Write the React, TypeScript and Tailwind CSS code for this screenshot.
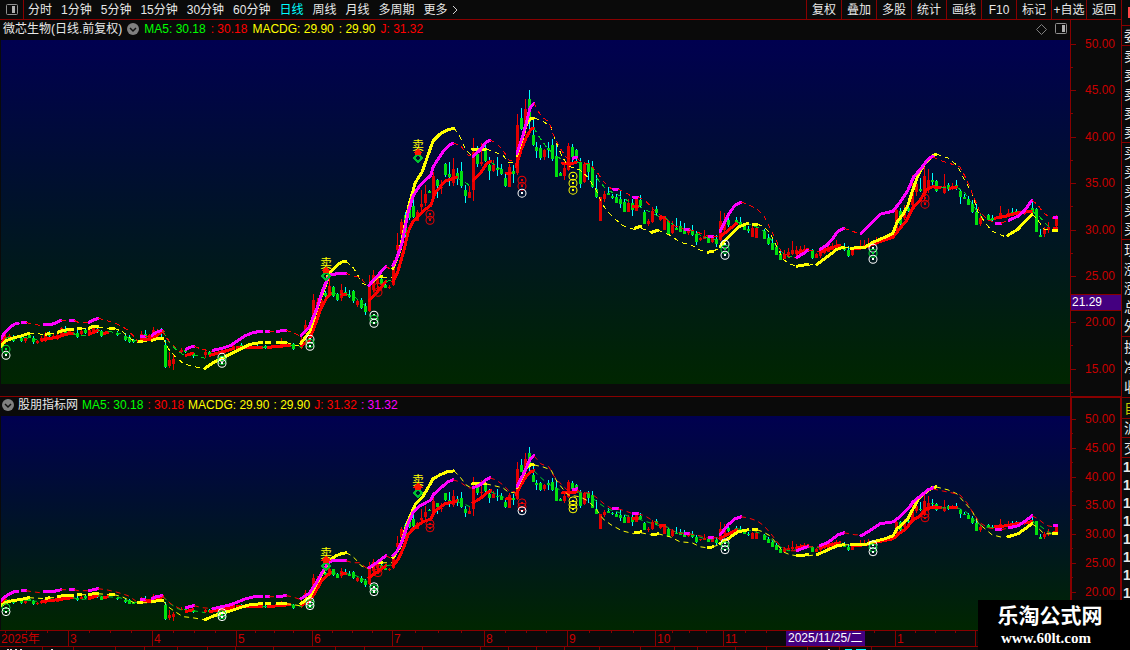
import { useMemo, useState, type ReactNode } from 'react'

type Tone = 'white' | 'green' | 'red' | 'yellow'
interface Candle { x: number; high: number; top: number; bottom: number; low: number; up: boolean }
interface Series { name: string; rise: string; fall: string; runs: string[] }
interface Legend { text: string; cls: string }

const TONES: Record<Tone, string> = { white: '#ffffff', green: '#00e030', red: '#f00000', yellow: '#ffff00' }

// x high top bottom low, r = rising day, g = falling day
const CANDLES = `
5 334 337 342 344 r|9 334 336 340 341 r|13 335 338 341 342 g|21 336 338 341 342 g|25 337 338 341 343 r|29 332 335 338 338 g|33 336 338 342 344 g
37 340 341 343 344 r|41 336 338 341 342 r|45 332 334 340 342 r|49 331 333 336 337 g|53 334 336 339 339 r|57 331 335 339 340 r|61 327 328 336 337 r
65 326 331 334 335 g|69 328 330 334 335 r|77 330 333 337 338 g|81 329 331 334 335 r|85 328 330 333 334 g|89 328 330 334 335 r|93 326 328 333 334 r
97 327 329 332 333 g|101 330 332 336 337 g|105 331 333 334 335 r|117 331 333 335 336 g|125 333 336 340 341 g|129 335 337 342 343 g|133 339 340 342 343 g
141 331 334 340 341 r|145 330 334 338 339 g|149 334 335 339 340 r|153 327 330 338 340 r|157 329 332 336 338 r|161 328 331 333 337 g
165 340 345 367 368 g|169 352 360 366 368 r|173 355 359 364 370 r|181 348 350 352 353 r|185 348 350 352 353 g|193 352 353 356 358 g|205 350 352 355 358 r|209 351 352 355 355 g
233 345 346 349 350 r|241 343 345 348 349 g|257 344 346 348 348 g|265 345 346 348 349 g|281 338 342 346 347 r|293 343 344 349 350 g|301 335 340 348 349 r
305 320 325 332 334 r|313 294 300 315 318 r|317 298 302 312 315 r|321 295 300 308 310 r|325 291 293 296 298 g|329 278 286 296 297 r|333 286 287 296 297 g
337 293 294 300 301 g|341 284 290 298 301 r|345 287 292 294 296 g|349 290 295 297 298 g|353 290 291 301 303 g|357 299 301 305 307 r|361 298 300 308 309 g|365 303 306 312 315 g
369 275 285 311 312 r|373 270 275 290 292 r|377 275 277 284 286 r|381 277 279 285 286 g|385 282 285 288 288 g|389 285 287 288 289 r|393 260 263 285 286 r
397 233 245 250 254 r|401 219 222 234 240 r|405 212 215 235 238 g|409 200 205 218 220 g|413 196 206 217 218 g|417 210 212 221 221 r|421 190 204 207 212 r|425 185 194 203 206 r
429 190 191 193 193 g|433 172 176 199 202 r|437 179 180 186 198 g|441 180 187 188 194 r|445 163 164 175 177 g|449 162 174 177 186 g|453 158 169 183 186 r|457 168 173 178 185 g
461 162 171 186 188 g|465 185 190 196 203 g|469 186 192 198 198 r|473 138 152 190 201 r|477 146 154 164 167 g|481 143 162 164 166 r|485 145 148 161 162 g|489 157 165 171 180 g
493 160 165 171 172 r|497 157 168 170 176 g|501 164 169 174 175 g|505 172 178 186 187 g|509 164 167 187 187 r|513 165 171 174 183 g|517 114 125 173 175 r|521 108 118 129 130 g
525 99 109 129 135 r|529 90 99 122 130 g|533 120 135 145 146 g|536 142 147 151 158 g|540 145 148 158 160 g|544 149 150 157 160 r|548 142 148 150 158 g|552 139 145 159 161 g
556 143 156 177 177 g|560 172 173 176 176 g|564 165 168 176 180 r|568 143 146 170 171 r|572 144 147 157 162 g|576 149 150 158 162 g|580 158 163 184 188 g|584 162 164 182 183 r
588 160 163 172 180 g|592 161 167 187 188 g|596 175 189 197 198 g|600 197 197 221 221 r|604 191 194 199 202 r|608 187 193 195 195 g|612 194 196 198 199 g|616 194 197 203 203 g
620 190 199 204 208 g|624 199 202 212 212 g|628 199 203 212 212 r|632 199 203 210 216 g|636 197 198 211 211 r|640 195 200 206 207 g|644 210 212 224 224 g|648 219 221 224 226 r
652 207 211 222 223 r|656 206 209 213 215 g|660 215 217 220 221 r|664 216 217 230 230 r|668 220 221 234 234 g|672 221 225 233 234 r|676 218 228 230 230 g|680 221 226 232 232 g
684 223 230 234 234 g|688 228 230 233 235 r|692 225 230 235 236 g|696 231 234 242 245 g|700 237 238 240 241 r|704 230 236 239 239 r|708 235 238 243 243 g|712 235 238 242 243 r
716 235 239 244 247 g|720 211 221 240 241 r|724 213 222 230 232 r|728 218 220 225 227 g|736 217 220 224 225 g|740 217 222 226 227 g|744 224 226 230 230 g|748 226 229 231 233 g
752 226 228 237 237 r|756 224 228 238 238 r|764 229 231 239 239 g|768 234 238 244 245 g|772 239 243 250 250 g|776 245 247 255 255 g|780 251 254 260 260 g|784 250 254 259 259 r
788 248 252 255 256 r|792 241 250 254 255 r|796 246 250 254 256 r|800 246 249 253 254 r|804 245 249 252 253 r|812 249 250 258 259 g|816 253 254 258 258 r|820 248 253 256 258 r
824 246 249 253 254 r|828 244 247 252 252 r|832 243 246 250 250 r|836 240 245 248 250 r|844 243 247 250 251 g|848 246 250 256 257 g|852 249 250 255 256 r|860 240 246 249 250 r
864 240 245 248 249 r|868 238 244 247 248 r|876 237 241 244 245 r|884 236 238 241 242 r|892 230 233 237 238 r|896 208 210 230 232 r|900 208 211 224 226 g|904 205 210 218 220 r
908 205 208 211 212 g|912 175 190 205 208 r|916 178 184 192 196 r|920 178 189 191 192 g|924 165 176 196 200 r|928 169 180 190 193 r|932 173 180 182 186 g|936 180 181 191 192 g
944 174 186 193 194 r|948 183 185 189 191 g|952 183 186 189 190 r|956 180 185 188 190 g|960 190 191 197 204 g|964 194 197 199 199 g|968 196 199 205 205 g|972 200 204 212 213 g
976 204 212 225 225 g|980 213 218 224 226 r|988 214 215 219 220 g|992 215 218 220 222 g|1000 206 213 218 219 r|1008 209 213 217 217 r|1012 208 212 216 216 g|1016 209 211 215 216 g
1024 209 211 214 215 r|1032 200 208 212 214 g|1036 208 209 232 232 g|1040 229 235 237 237 g|1044 227 229 234 237 r|1048 222 227 230 233 r|1056 215 217 226 227 r`
  .trim().split(/[|\n]/).map<Candle>(row => {
    const [x, high, top, bottom, low, dir] = row.trim().split(' ')
    return { x: +x, high: +high, top: +top, bottom: +bottom, low: +low, up: dir === 'r' }
  })

// "+" runs are drawn heavy, "-" runs as a thin dashed line
const SERIES: Series[] = [
  {
    name: 'MA5', rise: '#ff0000', fall: '#00d020',
    runs: [
      '+1,345 5,337', '-5,338 12,337 20,337 30,338 40,340', '+42,340 50,338 58,337 65,334 73,333', '-73,333 80,336 89,334', '+89,334 98,330', '-98,330 104,332', '+104,333 108,332',
      '-108,331 120,333 130,339 138,341', '+141,339 150,339 157,335 163,331', '-163,331 170,343 178,351 186,356', '+186,355 193,353', '-193,354 205,358', '+210,355 220,352 228,350 234,348',
      '+237,347 262,347', '-262,347 268,347', '+268,347 290,345', '-290,345 302,347', '+302,345 309,340 315,325 321,308 327,297 331,293', '-331,293 342,294', '+342,294 346,294',
      '-346,294 354,296 362,303 368,307', '+369,300 376,293 386,281', '-386,281 393,280', '+393,281 398,271 404,250 408,232 413,221 423,211 431,205 435,193 445,181 457,177',
      '-457,178 464,181 470,186', '+473,180 481,172 487,163 491,161', '-491,162 498,167 505,172', '+506,173 511,173', '+516,166 521,150 526,138 531,129 534,128',
      '-534,128 540,138 548,149 556,155 562,160', '+562,163 570,164 577,162', '-577,162 586,163 592,172 600,182 607,190 617,194 630,202', '+633,206 638,206', '-638,206 650,212 660,217',
      '+660,217 665,217', '-665,217 675,226 690,230 705,237 718,240', '+720,237 727,231 737,223', '-737,222 752,225 762,229 770,238 780,250 788,257 797,256', '+797,253 808,249', '-808,250 820,252',
      '+820,252 830,248 840,245', '-840,246 852,249', '+852,249 865,247 878,242 893,237 900,228 906,221 912,209 920,200 927,189 934,186', '+934,187 941,187', '-941,187 950,188',
      '+950,188 957,187', '-957,187 965,193 975,208 983,218 992,220', '+995,218 1006,216 1016,213 1024,212 1032,211', '-1032,211 1040,217 1048,226 1053,230', '+1054,228 1057,228',
    ],
  },
  {
    name: 'MACDG', rise: '#ffff00', fall: '#ffff00',
    runs: [
      '+1,346 5,341 12,338 20,336 29,333', '-29,333 45,334', '+46,334 49,333', '-49,333 57,333', '+58,332 63,330 73,329', '+78,328 81,328', '-81,328 89,328', '+89,328 93,326 98,326',
      '-98,327 110,328', '+110,328 114,328', '-114,328 122,331 128,336 134,341', '+138,341 142,341', '-142,341 152,341', '+152,340 158,338 163,338', '-163,338 168,348 175,356 183,363 192,366 204,368',
      '+205,368 212,363 220,359 228,355 240,349 250,344 262,342', '+266,342 270,342', '+277,342 286,342', '-286,342 293,344 300,346', '+301,343 310,331 315,315 321,297 327,281 328,275 336,266 341,262 346,261',
      '-346,261 352,266 357,273 361,282 368,286', '+370,284 377,277 382,276', '-382,277 392,277', '+393,268 400,250 404,230 409,205 413,191 415,183 422,172 428,155 433,141 440,134 447,130 454,128',
      '-454,128 460,137 466,150 471,155', '+472,149 486,149', '-486,149 495,152 503,155 508,162 515,163', '+517,155 522,140 526,125 530,119 534,118',
      '-534,118 543,121 551,127 556,142 562,156 568,166 580,170 588,177 596,190 603,205 611,215 622,225 634,229', '+635,228 641,226', '-641,228 651,232', '+652,232 658,230',
      '-658,230 670,235 680,242 692,245 700,250 707,252', '+708,252 713,251', '-713,251 719,248', '+720,246 728,237 738,227 748,223', '+753,224 757,224',
      '-757,224 763,226 770,233 776,245 783,259 790,264 797,266', '+797,266 808,264', '-808,265 817,264', '+817,264 828,256 837,249 844,247', '-844,247 851,248',
      '+851,248 865,247 873,242 885,237 893,233 897,222 903,214 908,205 912,192 918,175 925,163 932,156 936,154',
      '-936,154 948,158 957,165 963,177 972,193 978,212 985,222 992,231 1004,236', '+1008,235 1018,229 1025,221 1032,214', '-1032,214 1038,220 1044,229 1053,230', '+1053,230 1057,230',
    ],
  },
  {
    name: 'J', rise: '#ff00ff', fall: '#ff0000',
    runs: [
      '+1,338 5,332 10,327 14,324 18,323', '+22,322 26,322', '-26,322 32,324 40,325 44,325', '+44,324 52,324 57,322 61,320', '-61,320 70,320', '+70,320 74,320', '-74,320 78,322 88,322',
      '+89,322 93,320 98,318', '-98,318 106,320 115,323 122,326 128,330 134,336 138,341', '+141,336 145,336', '-145,336 152,336', '+152,335 156,332 162,330', '-162,330 166,337 172,344 180,351',
      '+186,349 190,347 194,346', '-194,346 202,349 213,351', '+213,350 222,348 231,345 238,340 246,335 254,332 262,331', '+266,331 269,331', '-269,331 277,331', '+277,331 286,330',
      '-286,330 292,332 301,336', '+301,335 309,327 317,308 322,292 328,277 332,274 346,273', '-346,273 353,276 360,277 366,284 369,287', '+369,285 378,275 386,266', '-386,266 392,270',
      '+393,265 396,260 402,243 408,213 413,196 420,185 431,175 433,167 442,153 448,146 453,143', '-453,143 460,145 468,155 474,155', '+473,156 480,150 486,142 490,140',
      '-490,140 496,143 503,150 509,160 515,162', '+517,153 523,135 527,120 530,108 534,103', '-534,103 541,116 549,122 553,134 560,148 567,158 572,158', '+573,158 577,157',
      '-577,158 582,163 590,164 597,172 604,182 612,189', '+613,189 618,189', '-618,189 625,192 633,197', '+633,197 638,197', '-638,197 645,200 653,209 663,217 675,226 684,229', '+685,229 689,229',
      '-689,229 700,233 708,236', '+709,236 713,236', '-713,236 720,236', '+720,231 728,215 735,205 741,202', '-741,202 748,204 757,209 764,216 771,230 777,242 781,251 790,257 796,257',
      '+797,257 804,253 808,250', '-808,250 820,251', '+820,249 827,245 833,238 838,231 844,228', '-844,228 855,232 860,232',
      '+861,233 868,226 880,214 893,211 900,202 908,190 913,178 922,167 928,159 933,156', '-933,157 942,161 952,164 960,167 967,180 973,195 980,212 988,220 995,222', '+996,223 1001,223',
      '-1001,223 1009,220', '+1009,220 1018,216 1024,211 1032,200', '-1032,200 1038,205 1043,212 1048,216 1053,218', '+1054,217 1057,217',
    ],
  },
]

const MARKS: [number, number, Tone][] = [
  [6, 349, 'green'], [6, 355, 'white'], [222, 357, 'white'], [222, 360, 'green'], [222, 363, 'white'],
  [310, 339, 'white'], [310, 343, 'green'], [310, 346, 'white'], [374, 315, 'white'], [374, 319, 'green'], [374, 323, 'white'],
  [378, 287, 'red'], [378, 292, 'red'], [430, 214, 'red'], [430, 220, 'red'], [522, 180, 'red'], [522, 186, 'red'], [522, 193, 'white'],
  [573, 176, 'yellow'], [573, 183, 'yellow'], [573, 190, 'yellow'], [725, 244, 'white'], [725, 249, 'green'], [725, 255, 'white'],
  [873, 248, 'white'], [873, 253, 'green'], [873, 259, 'white'], [925, 198, 'red'], [925, 204, 'red'],
]

const SELLS = [{ x: 326, y: 266 }, { x: 418, y: 148 }]

const PERIODS = ['分时', '1分钟', '5分钟', '15分钟', '30分钟', '60分钟', '日线', '周线', '月线', '多周期']
const TOOLS = ['复权', '叠加', '多股', '统计', '画线', 'F10', '标记', '+自选', '返回']

const VALUES: Legend[] = [
  { text: 'MA5: 30.18', cls: 'text-[#00ff00]' },
  { text: ': 30.18', cls: 'text-[#ff0000]' },
  { text: 'MACDG: 29.90', cls: 'text-[#ffff00]' },
  { text: ': 29.90', cls: 'text-[#ffff00]' },
  { text: 'J: 31.32', cls: 'text-[#ff0000]' },
]

const MONTHS = [
  { x: -16, label: '' }, { x: 68, label: '3' }, { x: 152, label: '4' }, { x: 236, label: '5' }, { x: 312, label: '6' }, { x: 392, label: '7' },
  { x: 484, label: '8' }, { x: 567, label: '9' }, { x: 655, label: '10' }, { x: 723, label: '11' }, { x: 809, label: '' }, { x: 895, label: '1' }, { x: 975, label: '2' },
]

const mainY = (y: number) => y
// the lower pane shows the same prices on a flatter scale
const lowerY = (y: number) => Math.round(419 + (y - 44) * 0.6193)

function Plot({ top, height, scale, id }: { top: number; height: number; scale: (y: number) => number; id: string }) {
  const lines = useMemo(() => SERIES.map(s => s.runs.map(run => ({
    heavy: run[0] === '+',
    color: run[0] === '+' ? s.rise : s.fall,
    points: run.slice(1).split(' ').map(p => {
      const [x, y] = p.split(',').map(Number)
      return `${x},${scale(y)}`
    }).join(' '),
  }))), [scale])

  return (
    <svg viewBox={`1 ${top} 1069 ${height}`} preserveAspectRatio="none" shapeRendering="crispEdges" className="block w-full h-full" role="img" aria-label={id}>
      <defs>
        <linearGradient id={id} x1="0" y1="0" x2="0" y2="1">
          <stop offset="0" stopColor="#000050" />
          <stop offset="1" stopColor="#002600" />
        </linearGradient>
      </defs>
      <rect x="1" y={top} width="1069" height={height} fill={`url(#${id})`} />
      {CANDLES.map(c => {
        const y = scale(c.top)
        return (
          <g key={c.x}>
            <rect x={c.x} y={scale(c.high)} width="1" height={Math.max(1, scale(c.low) - scale(c.high))} fill={c.up ? '#f00000' : '#00ffff'} />
            <rect x={c.x - 1} y={y} width="3" height={Math.max(1, scale(c.bottom) - y)} fill={c.up ? '#e00000' : '#00e010'} />
          </g>
        )
      })}
      {lines.map((runs, i) => (
        <g key={SERIES[i].name} fill="none">
          {runs.map((r, j) => (
            <polyline key={j} points={r.points} stroke={r.color} strokeWidth={r.heavy ? 3 : 1} strokeDasharray={r.heavy ? undefined : '5 4'} strokeLinejoin="round" strokeLinecap={r.heavy ? 'round' : 'butt'} />
          ))}
        </g>
      ))}
      {MARKS.map(([x, y, tone]) => (
        <g key={`${x}-${y}`}>
          <circle cx={x} cy={scale(y)} r="4" fill="none" stroke={TONES[tone]} shapeRendering="geometricPrecision" />
          <rect x={x - 1} y={scale(y) - 1} width="2" height="2" fill={TONES[tone]} />
        </g>
      ))}
      {SELLS.map(s => {
        const y = scale(s.y)
        return (
          <g key={s.x}>
            <text x={s.x} y={y + 2} textAnchor="middle" fontSize="12" fill="#ffff00">卖</text>
            <path d={`M${s.x} ${y + 6}l4 4l-4 4l-4 -4z`} fill="none" stroke="#00c030" strokeWidth="2" />
            <path d={`M${s.x} ${y}l5 5h-2v2h-6v-2h-2z`} fill="#ff1800" />
          </g>
        )
      })}
    </svg>
  )
}

interface AxisProps { top: number; height: number; first: number; step: number; count: number; rule: number; children?: ReactNode }

function PriceAxis({ top, height, first, step, count, rule, children }: AxisProps) {
  return (
    <svg viewBox={`1070 ${top} 51 ${height}`} preserveAspectRatio="none" shapeRendering="crispEdges" className="block w-[51px] h-full shrink-0">
      <rect x="1070" y={top} width={rule} height={height} fill="#880000" />
      {Array.from({ length: count }, (_, i) => {
        const y = Math.round(first + i * step)
        return (
          <g key={i}>
            <rect x="1071" y={y} width="5" height="1" fill="#880000" />
            <rect x="1071" y={Math.round(y + step / 2)} width="2" height="1" fill="#880000" />
            <text x="1085" y={y + 4} fontSize="12" fill="#c80000">{`${50 - i * 5}.00`}</text>
          </g>
        )
      })}
      {children}
    </svg>
  )
}

function Chevron() {
  return (
    <button aria-label="指标菜单" className="shrink-0">
      <svg width="12" height="12" viewBox="0 0 12 12" className="block">
        <circle cx="6" cy="6" r="6" fill="#808080" />
        <path d="M3 5l3 3l3 -3" fill="none" stroke="#101010" strokeWidth="1.5" />
      </svg>
    </button>
  )
}

function PanelIcon({ left }: { left?: boolean }) {
  return (
    <svg width="12" height="12" viewBox="0 0 12 12" className="block">
      <rect x="0.5" y="0.5" width="11" height="10" rx="1" fill="none" stroke="#909090" />
      <rect x={left ? 6 : 7} y="2" width="3" height="7" fill="#b0b0b0" />
    </svg>
  )
}

function Values({ items }: { items: Legend[] }) {
  return <>{items.map((v, i) => <span key={i} className={v.cls}>{v.text}</span>)}</>
}

function TimeAxis() {
  return (
    <svg viewBox="0 0 1121 17" preserveAspectRatio="none" shapeRendering="crispEdges" className="block w-full h-[17px] shrink-0">
      <rect width="1121" height="1" fill="#880000" />
      <rect y="16" width="1121" height="1" fill="#880000" />
      {MONTHS.map((m, i) => {
        const next = MONTHS[i + 1]?.x ?? 1060
        return (
          <g key={m.x}>
            {m.label && <rect x={m.x} width="1" height="17" fill="#880000" />}
            {[1, 2, 3].map(n => <rect key={n} x={Math.round(m.x + ((next - m.x) * n) / 4)} width="1" height="3" fill="#880000" />)}
            <text x={m.x + 2} y="13" fontSize="12" fill="#c80000">{m.label}</text>
          </g>
        )
      })}
      <text x="1" y="13" fontSize="12" fill="#c80000">2025年</text>
      <rect x="786" y="1" width="79" height="15" fill="#440080" />
      <text x="788" y="12" fontSize="12" fill="#ffffff">2025/11/25/二</text>
    </svg>
  )
}

const STATUS_TICKS = [42, 73, 115, 144, 177, 207, 235, 273, 335, 364, 422, 480, 508, 536, 564, 599, 640, 674, 697, 735, 766, 807, 839, 871]

function StatusEdge() {
  return (
    <svg viewBox="0 0 1121 3" preserveAspectRatio="none" shapeRendering="crispEdges" className="block w-full h-[3px] shrink-0">
      {STATUS_TICKS.map(x => <rect key={x} x={x} width="1" height="3" fill="#880000" />)}
      {[7, 10, 15, 20, 51, 828].map(x => <rect key={x} x={x} y="2" width="2" height="1" fill="#e0e0e0" />)}
      <rect x="845" y="2" width="7" height="1" fill="#00ffff" />
      <rect x="856" y="2" width="10" height="1" fill="#00ffff" />
    </svg>
  )
}

function QuoteEdge() {
  const groups = [
    { rows: ['委'], h: 'h-[20px]' },
    { rows: ['卖', '卖', '卖', '卖', '卖'], h: 'h-[97px]' },
    { rows: ['买', '买', '买', '买', '买'], h: 'h-[97px]' },
    { rows: ['现', '涨', '涨', '总', '外'], h: 'h-[97px]' },
    { rows: ['换', '净', '收'], h: 'h-[61px]' },
    { rows: ['自'], h: 'h-[21px]' },
    { rows: ['沪'], h: 'h-[19px]' },
    { rows: ['交'], h: 'h-[20px]' },
  ]
  return (
    <aside className="w-[9px] shrink-0 overflow-hidden border-l border-[#880000] text-[#e8e8e8]">
      <div className="h-[26px] border-b border-[#880000] pt-[7px] pl-[6px]">
        <div className="h-[11px] bg-[#ff4848]" />
      </div>
      {groups.map((g, i) => (
        <div key={i} className={`${g.h} flex flex-col border-b border-[#880000] pl-[2px]`}>
          {g.rows.map((r, j) => (
            <span key={j} className={`flex flex-1 items-center whitespace-nowrap text-sm leading-none ${r === '自' ? 'text-[#c8c800]' : ''}`}>{r}</span>
          ))}
        </div>
      ))}
      {Array.from({ length: 8 }, (_, i) => <div key={i} className="h-[18px] pl-px text-sm font-bold leading-[18px]">1</div>)}
    </aside>
  )
}

export default function App() {
  const [period, setPeriod] = useState('日线')

  return (
    <div className="relative flex h-screen overflow-hidden bg-[#0a0a0a] font-['Liberation_Sans','Noto_Sans_CJK_SC',sans-serif] text-xs leading-none text-[#e8e8e8]">
      <div className="flex min-w-0 flex-1 flex-col">
        <nav className="flex h-[20px] shrink-0 items-stretch border-b border-[#880000] whitespace-nowrap">
          <button aria-label="侧栏" className="flex w-[24px] items-center justify-center border-r border-[#880000]"><PanelIcon left /></button>
          <div className="flex flex-1 items-center gap-[9px] pl-1">
            {PERIODS.map(p => (
              <button key={p} onClick={() => setPeriod(p)} className={p === period ? 'text-[#00ffff]' : 'hover:text-white'}>{p}</button>
            ))}
            <button className="flex items-center gap-1">
              更多
              <svg width="6" height="10" viewBox="0 0 6 10"><path d="M1 1l4 4l-4 4" fill="none" stroke="#d0d0d0" /></svg>
            </button>
          </div>
          {TOOLS.map(t => (
            <button key={t} className="flex w-[35px] items-center justify-center border-l border-[#880000] hover:text-white">{t}</button>
          ))}
        </nav>

        <section className="flex min-h-0 flex-[377] border-b border-[#880000]">
          <div className="flex min-w-0 flex-1 flex-col pb-3">
            <header className="flex h-[20px] shrink-0 items-center gap-[5px] pl-[3px] pb-[2px] whitespace-nowrap">
              <h1>微芯生物(日线.前复权)</h1>
              <Chevron />
              <Values items={VALUES} />
              <div className="ml-auto flex items-center gap-2 pr-[3px]">
                <svg width="11" height="11" viewBox="0 0 11 11"><path d="M5.5 0.5l5 5l-5 5l-5 -5z" fill="none" stroke="#808080" /></svg>
                <PanelIcon />
              </div>
            </header>
            <div className="min-h-0 flex-1 pl-px"><Plot top={40} height={344} scale={mainY} id="main-plot" /></div>
          </div>
          <PriceAxis top={20} height={376} first={44} step={46.4} count={8} rule={1}>
            <rect x="1071" y="294" width="50" height="17" fill="#880000" />
            <rect x="1071" y="295" width="50" height="15" fill="#440080" />
            <text x="1072" y="306" fontSize="12" fill="#ffffff">21.29</text>
          </PriceAxis>
        </section>

        <section className="flex min-h-0 flex-[233]">
          <div className="flex min-w-0 flex-1 flex-col">
            <header className="flex h-[19px] shrink-0 items-center gap-1 pl-[2px] pb-[3px] whitespace-nowrap">
              <Chevron />
              <h2>股朋指标网</h2>
              <Values items={[...VALUES, { text: ': 31.32', cls: 'text-[#ff00ff]' }]} />
            </header>
            <div className="min-h-0 flex-1 pl-px"><Plot top={416} height={214} scale={lowerY} id="lower-plot" /></div>
          </div>
          <PriceAxis top={397} height={233} first={419} step={28.8} count={7} rule={2}>
            <rect x="1070" y="397" width="51" height="1" fill="#880000" />
            <rect x="1120" y="397" width="1" height="233" fill="#880000" />
          </PriceAxis>
        </section>

        <TimeAxis />
        <StatusEdge />
      </div>

      <QuoteEdge />

      <div className="absolute right-0 bottom-0 flex h-[50px] w-[152px] flex-col items-center justify-center gap-1 bg-black pr-2 text-white">
        <p className="text-[21px] font-bold leading-[22px]">乐淘公式网</p>
        <a href="#" className="font-['Liberation_Serif',serif] text-[15px] font-bold leading-[15px] pr-2">www.60lt.com</a>
      </div>
    </div>
  )
}
